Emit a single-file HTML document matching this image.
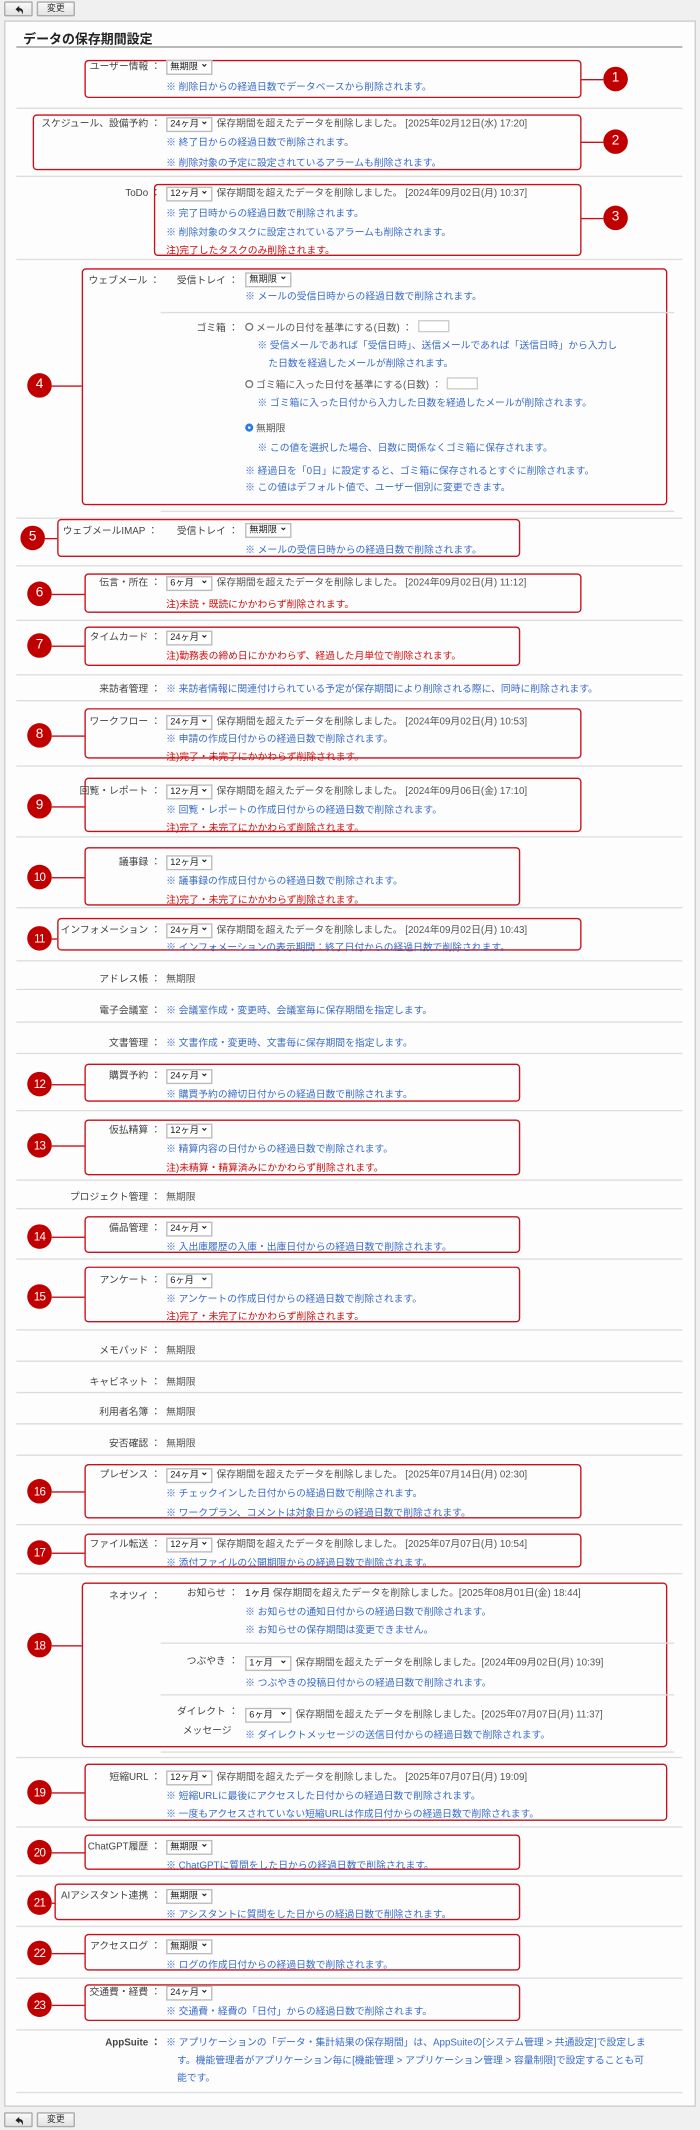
<!DOCTYPE html>
<html><head><meta charset="utf-8"><style>
html,body{margin:0;padding:0;background:#f0f0f0;width:700px;height:2130px;overflow:hidden}
#w{position:absolute;left:0;top:0;width:514px;height:1564px;transform:scale(1.3619);transform-origin:0 0;font-family:"Liberation Sans","Noto Sans CJK JP",sans-serif}
#w div{position:absolute;box-sizing:border-box}
.btn{height:11px;top:1px;border:1px solid #aaa;background:linear-gradient(#fafafa,#e2e2e2);border-radius:1px;font-size:6.5px;line-height:9px;text-align:center;color:#333}
.btn svg{position:absolute;left:7px;top:1.5px}
.p{left:3px;top:15px;width:508px;height:1532px;background:#fdfdfd;border:1px solid #ccc}
.t,.l,.n,.r,.g{font-size:7.2px;line-height:9px;white-space:nowrap}
.l{color:#444;text-align:right}
.n{color:#3a6cc8}.r{color:#d01010}.g{color:#555}
.d{left:12px;width:489px;height:1px;background:#ddd}
.di{left:118px;width:377px;height:1px;background:#ddd}
.b{border:1px solid #c8101a;border-radius:3px}
.c{width:18px;height:18px;border-radius:50%;background:#c00000;color:#fff;font-size:10px;line-height:18px;text-align:center}
.c2{font-size:8.5px;letter-spacing:-.5px}
.k{height:1px;background:#c8101a}
.s{height:11px;border:1px solid #bbb;background:#fff;font-size:6.8px;line-height:9px;padding-left:2px;color:#222;top:0}
.s:after{content:"⌄";position:absolute;right:2px;top:-2px;font-weight:bold;font-size:7px}
.in{width:23px;height:9px;border:1px solid #ccc;background:#fff}
.rd{width:6px;height:6px;border:1px solid #777;border-radius:50%;background:#fff}
</style></head><body><div id="w">
<div class="btn" style="left:3px;width:21px"><svg width="7" height="7" viewBox="0 0 10 10"><path d="M4.5 0.5 L0.5 4 L4.5 7.5 V5.3 C6.5 5.3 7.5 6.5 7.5 9.5 C9.5 5.5 8 3 4.5 2.8 Z" fill="#222"/></svg></div>
<div class="btn" style="left:27px;width:28px">変更</div>
<div class="p"></div>
<div style="left:17px;top:21px;font-size:9.5px;font-weight:bold;color:#222;white-space:nowrap">データの保存期間設定</div>
<div style="left:12px;top:34px;width:489px;height:1px;background:#999"></div>

<!-- 1 -->
<div class="b" style="left:62px;top:44px;width:365px;height:28px"></div>
<div class="k" style="left:427px;top:58px;width:16px"></div><div class="c" style="left:443px;top:49px">1</div>
<div class="l" style="right:396px;top:44px">ユーザー情報 ：</div>
<div class="s" style="left:122px;top:44px;width:34px">無期限</div>
<div class="n" style="left:122px;top:59px">※ 削除日からの経過日数でデータベースから削除されます。</div>
<div class="d" style="top:79px"></div>

<!-- 2 -->
<div class="b" style="left:24px;top:84px;width:403px;height:41px"></div>
<div class="k" style="left:427px;top:104px;width:16px"></div><div class="c" style="left:443px;top:95px">2</div>
<div class="l" style="right:396px;top:86px">スケジュール、設備予約 ：</div>
<div class="s" style="left:122px;top:86px;width:34px">24ヶ月</div>
<div class="g" style="left:159px;top:86px">保存期間を超えたデータを削除しました。 [2025年02月12日(水) 17:20]</div>
<div class="n" style="left:122px;top:100px">※ 終了日からの経過日数で削除されます。</div>
<div class="n" style="left:122px;top:115px">※ 削除対象の予定に設定されているアラームも削除されます。</div>
<div class="d" style="top:129px"></div>

<!-- 3 -->
<div class="b" style="left:113px;top:135px;width:314px;height:53px"></div>
<div class="k" style="left:427px;top:160px;width:16px"></div><div class="c" style="left:443px;top:151px">3</div>
<div class="l" style="right:396px;top:137px">ToDo ：</div>
<div class="s" style="left:122px;top:137px;width:34px">12ヶ月</div>
<div class="g" style="left:159px;top:137px">保存期間を超えたデータを削除しました。 [2024年09月02日(月) 10:37]</div>
<div class="n" style="left:122px;top:152px">※ 完了日時からの経過日数で削除されます。</div>
<div class="n" style="left:122px;top:166px">※ 削除対象のタスクに設定されているアラームも削除されます。</div>
<div class="r" style="left:122px;top:179px">注)完了したタスクのみ削除されます。</div>
<div class="d" style="top:190px"></div>

<!-- 4 -->
<div class="b" style="left:60px;top:197px;width:430px;height:174px"></div>
<div class="k" style="left:38px;top:283px;width:22px"></div><div class="c" style="left:20px;top:274px">4</div>
<div class="l" style="left:65px;top:201px">ウェブメール ：</div>
<div class="l" style="right:339px;top:201px">受信トレイ ：</div>
<div class="s" style="left:180px;top:200px;width:34px">無期限</div>
<div class="n" style="left:180px;top:213px">※ メールの受信日時からの経過日数で削除されます。</div>
<div class="di" style="top:229px"></div>
<div class="l" style="right:339px;top:236px">ゴミ箱 ：</div>
<div class="rd" style="left:180px;top:237px"></div>
<div class="g" style="left:188px;top:236px">メールの日付を基準にする(日数) ：</div>
<div class="in" style="left:307px;top:235px"></div>
<div class="n" style="left:189px;top:249px">※ 受信メールであれば「受信日時」、送信メールであれば「送信日時」から入力し</div>
<div class="n" style="left:197px;top:262px">た日数を経過したメールが削除されます。</div>
<div class="rd" style="left:180px;top:279px"></div>
<div class="g" style="left:188px;top:278px">ゴミ箱に入った日付を基準にする(日数) ：</div>
<div class="in" style="left:328px;top:277px"></div>
<div class="n" style="left:189px;top:291px">※ ゴミ箱に入った日付から入力した日数を経過したメールが削除されます。</div>
<div class="rd" style="left:180px;top:311px;border:2px solid #2a7de1;background:#2a7de1;box-shadow:inset 0 0 0 1px #fff"></div>
<div class="g" style="left:188px;top:310px">無期限</div>
<div class="n" style="left:189px;top:324px">※ この値を選択した場合、日数に関係なくゴミ箱に保存されます。</div>
<div class="n" style="left:180px;top:341px">※ 経過日を「0日」に設定すると、ゴミ箱に保存されるとすぐに削除されます。</div>
<div class="n" style="left:180px;top:353px">※ この値はデフォルト値で、ユーザー個別に変更できます。</div>
<div class="di" style="top:375px"></div>
<div class="d" style="top:380px"></div>

<!-- 5 -->
<div class="b" style="left:42px;top:381px;width:340px;height:28px"></div>
<div class="k" style="left:33px;top:395px;width:9px"></div><div class="c" style="left:15px;top:386px">5</div>
<div class="l" style="left:46px;top:385px">ウェブメールIMAP ：</div>
<div class="l" style="right:339px;top:385px">受信トレイ ：</div>
<div class="s" style="left:180px;top:384px;width:34px">無期限</div>
<div class="n" style="left:180px;top:399px">※ メールの受信日時からの経過日数で削除されます。</div>
<div class="d" style="top:415px"></div>

<!-- 6 -->
<div class="b" style="left:62px;top:421px;width:365px;height:29px"></div>
<div class="k" style="left:38px;top:436px;width:24px"></div><div class="c" style="left:20px;top:427px">6</div>
<div class="l" style="right:396px;top:423px">伝言・所在 ：</div>
<div class="s" style="left:122px;top:423px;width:34px">6ヶ月</div>
<div class="g" style="left:159px;top:423px">保存期間を超えたデータを削除しました。 [2024年09月02日(月) 11:12]</div>
<div class="r" style="left:122px;top:439px">注)未読・既読にかかわらず削除されます。</div>
<div class="d" style="top:455px"></div>

<!-- 7 -->
<div class="b" style="left:62px;top:460px;width:320px;height:29px"></div>
<div class="k" style="left:38px;top:474px;width:24px"></div><div class="c" style="left:20px;top:465px">7</div>
<div class="l" style="right:396px;top:463px">タイムカード ：</div>
<div class="s" style="left:122px;top:463px;width:34px">24ヶ月</div>
<div class="r" style="left:122px;top:477px">注)勤務表の締め日にかかわらず、経過した月単位で削除されます。</div>
<div class="d" style="top:495px"></div>

<div class="l" style="right:396px;top:501px">来訪者管理 ：</div>
<div class="n" style="left:122px;top:501px">※ 来訪者情報に関連付けられている予定が保存期間により削除される際に、同時に削除されます。</div>
<div class="d" style="top:514px"></div>

<!-- 8 -->
<div class="b" style="left:62px;top:520px;width:365px;height:37px"></div>
<div class="k" style="left:38px;top:540px;width:24px"></div><div class="c" style="left:20px;top:531px">8</div>
<div class="l" style="right:396px;top:525px">ワークフロー ：</div>
<div class="s" style="left:122px;top:525px;width:34px">24ヶ月</div>
<div class="g" style="left:159px;top:525px">保存期間を超えたデータを削除しました。 [2024年09月02日(月) 10:53]</div>
<div class="n" style="left:122px;top:538px">※ 申請の作成日付からの経過日数で削除されます。</div>
<div class="r" style="left:122px;top:551px">注)完了・未完了にかかわらず削除されます。</div>
<div class="d" style="top:562px"></div>

<!-- 9 -->
<div class="b" style="left:62px;top:571px;width:365px;height:40px"></div>
<div class="k" style="left:38px;top:592px;width:24px"></div><div class="c" style="left:20px;top:583px">9</div>
<div class="l" style="right:396px;top:576px">回覧・レポート ：</div>
<div class="s" style="left:122px;top:576px;width:34px">12ヶ月</div>
<div class="g" style="left:159px;top:576px">保存期間を超えたデータを削除しました。 [2024年09月06日(金) 17:10]</div>
<div class="n" style="left:122px;top:590px">※ 回覧・レポートの作成日付からの経過日数で削除されます。</div>
<div class="r" style="left:122px;top:603px">注)完了・未完了にかかわらず削除されます。</div>
<div class="d" style="top:614px"></div>

<!-- 10 -->
<div class="b" style="left:62px;top:622px;width:320px;height:43px"></div>
<div class="k" style="left:38px;top:644px;width:24px"></div><div class="c c2" style="left:20px;top:635px">10</div>
<div class="l" style="right:396px;top:628px">議事録 ：</div>
<div class="s" style="left:122px;top:628px;width:34px">12ヶ月</div>
<div class="n" style="left:122px;top:642px">※ 議事録の作成日付からの経過日数で削除されます。</div>
<div class="r" style="left:122px;top:656px">注)完了・未完了にかかわらず削除されます。</div>
<div class="d" style="top:666px"></div>

<!-- 11 -->
<div class="b" style="left:42px;top:674px;width:385px;height:24px"></div>
<div class="k" style="left:38px;top:689px;width:4px"></div><div class="c c2" style="left:20px;top:680px">11</div>
<div class="l" style="right:396px;top:678px">インフォメーション ：</div>
<div class="s" style="left:122px;top:678px;width:34px">24ヶ月</div>
<div class="g" style="left:159px;top:678px">保存期間を超えたデータを削除しました。 [2024年09月02日(月) 10:43]</div>
<div class="n" style="left:122px;top:691px">※ インフォメーションの表示期間：終了日付からの経過日数で削除されます。</div>
<div class="d" style="top:705px"></div>

<div class="l" style="right:396px;top:714px">アドレス帳 ：</div><div class="g" style="left:122px;top:714px">無期限</div>
<div class="d" style="top:726px"></div>
<div class="l" style="right:396px;top:737px">電子会議室 ：</div><div class="n" style="left:122px;top:737px">※ 会議室作成・変更時、会議室毎に保存期間を指定します。</div>
<div class="d" style="top:750px"></div>
<div class="l" style="right:396px;top:761px">文書管理 ：</div><div class="n" style="left:122px;top:761px">※ 文書作成・変更時、文書毎に保存期間を指定します。</div>
<div class="d" style="top:773px"></div>

<!-- 12 -->
<div class="b" style="left:62px;top:781px;width:320px;height:28px"></div>
<div class="k" style="left:38px;top:796px;width:24px"></div><div class="c c2" style="left:20px;top:787px">12</div>
<div class="l" style="right:396px;top:785px">購買予約 ：</div>
<div class="s" style="left:122px;top:785px;width:34px">24ヶ月</div>
<div class="n" style="left:122px;top:799px">※ 購買予約の締切日付からの経過日数で削除されます。</div>
<div class="d" style="top:815px"></div>

<!-- 13 -->
<div class="b" style="left:62px;top:822px;width:320px;height:41px"></div>
<div class="k" style="left:38px;top:841px;width:24px"></div><div class="c c2" style="left:20px;top:832px">13</div>
<div class="l" style="right:396px;top:825px">仮払精算 ：</div>
<div class="s" style="left:122px;top:825px;width:34px">12ヶ月</div>
<div class="n" style="left:122px;top:839px">※ 精算内容の日付からの経過日数で削除されます。</div>
<div class="r" style="left:122px;top:853px">注)未精算・精算済みにかかわらず削除されます。</div>
<div class="d" style="top:866px"></div>

<div class="l" style="right:396px;top:874px">プロジェクト管理 ：</div><div class="g" style="left:122px;top:874px">無期限</div>
<div class="d" style="top:887px"></div>

<!-- 14 -->
<div class="b" style="left:62px;top:893px;width:320px;height:27px"></div>
<div class="k" style="left:38px;top:908px;width:24px"></div><div class="c c2" style="left:20px;top:899px">14</div>
<div class="l" style="right:396px;top:897px">備品管理 ：</div>
<div class="s" style="left:122px;top:897px;width:34px">24ヶ月</div>
<div class="n" style="left:122px;top:911px">※ 入出庫履歴の入庫・出庫日付からの経過日数で削除されます。</div>
<div class="d" style="top:924px"></div>

<!-- 15 -->
<div class="b" style="left:62px;top:930px;width:320px;height:41px"></div>
<div class="k" style="left:38px;top:952px;width:24px"></div><div class="c c2" style="left:20px;top:943px">15</div>
<div class="l" style="right:396px;top:935px">アンケート ：</div>
<div class="s" style="left:122px;top:935px;width:34px">6ヶ月</div>
<div class="n" style="left:122px;top:949px">※ アンケートの作成日付からの経過日数で削除されます。</div>
<div class="r" style="left:122px;top:962px">注)完了・未完了にかかわらず削除されます。</div>
<div class="d" style="top:976px"></div>

<div class="l" style="right:396px;top:987px">メモパッド ：</div><div class="g" style="left:122px;top:987px">無期限</div>
<div class="d" style="top:999px"></div>
<div class="l" style="right:396px;top:1010px">キャビネット ：</div><div class="g" style="left:122px;top:1010px">無期限</div>
<div class="d" style="top:1022px"></div>
<div class="l" style="right:396px;top:1032px">利用者名簿 ：</div><div class="g" style="left:122px;top:1032px">無期限</div>
<div class="d" style="top:1045px"></div>
<div class="l" style="right:396px;top:1055px">安否確認 ：</div><div class="g" style="left:122px;top:1055px">無期限</div>
<div class="d" style="top:1068px"></div>

<!-- 16 -->
<div class="b" style="left:62px;top:1075px;width:365px;height:40px"></div>
<div class="k" style="left:38px;top:1095px;width:24px"></div><div class="c c2" style="left:20px;top:1086px">16</div>
<div class="l" style="right:396px;top:1078px">プレゼンス ：</div>
<div class="s" style="left:122px;top:1078px;width:34px">24ヶ月</div>
<div class="g" style="left:159px;top:1078px">保存期間を超えたデータを削除しました。 [2025年07月14日(月) 02:30]</div>
<div class="n" style="left:122px;top:1092px">※ チェックインした日付からの経過日数で削除されます。</div>
<div class="n" style="left:122px;top:1106px">※ ワークプラン、コメントは対象日からの経過日数で削除されます。</div>
<div class="d" style="top:1119px"></div>

<!-- 17 -->
<div class="b" style="left:62px;top:1126px;width:365px;height:25px"></div>
<div class="k" style="left:38px;top:1140px;width:24px"></div><div class="c c2" style="left:20px;top:1131px">17</div>
<div class="l" style="right:396px;top:1129px">ファイル転送 ：</div>
<div class="s" style="left:122px;top:1129px;width:34px">12ヶ月</div>
<div class="g" style="left:159px;top:1129px">保存期間を超えたデータを削除しました。 [2025年07月07日(月) 10:54]</div>
<div class="n" style="left:122px;top:1143px">※ 添付ファイルの公開期限からの経過日数で削除されます。</div>
<div class="d" style="top:1155px"></div>

<!-- 18 -->
<div class="b" style="left:60px;top:1162px;width:430px;height:121px"></div>
<div class="k" style="left:38px;top:1208px;width:22px"></div><div class="c c2" style="left:20px;top:1199px">18</div>
<div class="l" style="right:396px;top:1167px">ネオツイ ：</div>
<div class="l" style="right:339px;top:1165px">お知らせ ：</div>
<div class="g" style="left:180px;top:1165px"><span style="color:#222">1ヶ月</span> 保存期間を超えたデータを削除しました。[2025年08月01日(金) 18:44]</div>
<div class="n" style="left:180px;top:1179px">※ お知らせの通知日付からの経過日数で削除されます。</div>
<div class="n" style="left:180px;top:1192px">※ お知らせの保存期間は変更できません。</div>
<div class="di" style="top:1206px"></div>
<div class="l" style="right:339px;top:1215px">つぶやき ：</div>
<div class="s" style="left:180px;top:1216px;width:34px">1ヶ月</div>
<div class="g" style="left:217px;top:1216px">保存期間を超えたデータを削除しました。[2024年09月02日(月) 10:39]</div>
<div class="n" style="left:180px;top:1231px">※ つぶやきの投稿日付からの経過日数で削除されます。</div>
<div class="di" style="top:1244px"></div>
<div class="l" style="right:339px;top:1252px">ダイレクト ：</div>
<div class="l" style="right:344px;top:1266px">メッセージ</div>
<div class="s" style="left:180px;top:1254px;width:34px">6ヶ月</div>
<div class="g" style="left:217px;top:1254px">保存期間を超えたデータを削除しました。[2025年07月07日(月) 11:37]</div>
<div class="n" style="left:180px;top:1269px">※ ダイレクトメッセージの送信日付からの経過日数で削除されます。</div>
<div class="di" style="top:1286px"></div>
<div class="d" style="top:1290px"></div>

<!-- 19 -->
<div class="b" style="left:62px;top:1295px;width:428px;height:42px"></div>
<div class="k" style="left:38px;top:1316px;width:24px"></div><div class="c c2" style="left:20px;top:1307px">19</div>
<div class="l" style="right:396px;top:1300px">短縮URL ：</div>
<div class="s" style="left:122px;top:1300px;width:34px">12ヶ月</div>
<div class="g" style="left:159px;top:1300px">保存期間を超えたデータを削除しました。 [2025年07月07日(月) 19:09]</div>
<div class="n" style="left:122px;top:1314px">※ 短縮URLに最後にアクセスした日付からの経過日数で削除されます。</div>
<div class="n" style="left:122px;top:1327px">※ 一度もアクセスされていない短縮URLは作成日付からの経過日数で削除されます。</div>
<div class="d" style="top:1341px"></div>

<!-- 20 -->
<div class="b" style="left:62px;top:1347px;width:320px;height:26px"></div>
<div class="k" style="left:38px;top:1360px;width:24px"></div><div class="c c2" style="left:20px;top:1351px">20</div>
<div class="l" style="right:396px;top:1351px">ChatGPT履歴 ：</div>
<div class="s" style="left:122px;top:1351px;width:34px">無期限</div>
<div class="n" style="left:122px;top:1365px">※ ChatGPTに質問をした日からの経過日数で削除されます。</div>
<div class="d" style="top:1377px"></div>

<!-- 21 -->
<div class="b" style="left:40px;top:1383px;width:342px;height:27px"></div>
<div class="k" style="left:38px;top:1397px;width:2px"></div><div class="c c2" style="left:20px;top:1388px">21</div>
<div class="l" style="right:396px;top:1387px">AIアシスタント連携 ：</div>
<div class="s" style="left:122px;top:1387px;width:34px">無期限</div>
<div class="n" style="left:122px;top:1401px">※ アシスタントに質問をした日からの経過日数で削除されます。</div>
<div class="d" style="top:1414px"></div>

<!-- 22 -->
<div class="b" style="left:62px;top:1420px;width:320px;height:27px"></div>
<div class="k" style="left:38px;top:1434px;width:24px"></div><div class="c c2" style="left:20px;top:1425px">22</div>
<div class="l" style="right:396px;top:1424px">アクセスログ ：</div>
<div class="s" style="left:122px;top:1424px;width:34px">無期限</div>
<div class="n" style="left:122px;top:1438px">※ ログの作成日付からの経過日数で削除されます。</div>
<div class="d" style="top:1452px"></div>

<!-- 23 -->
<div class="b" style="left:62px;top:1457px;width:320px;height:27px"></div>
<div class="k" style="left:38px;top:1472px;width:24px"></div><div class="c c2" style="left:20px;top:1463px">23</div>
<div class="l" style="right:396px;top:1458px">交通費・経費 ：</div>
<div class="s" style="left:122px;top:1458px;width:34px">24ヶ月</div>
<div class="n" style="left:122px;top:1472px">※ 交通費・経費の「日付」からの経過日数で削除されます。</div>
<div class="d" style="top:1490px"></div>

<div class="l" style="right:396px;top:1495px;font-weight:bold">AppSuite ：</div>
<div class="n" style="left:122px;top:1495px">※ アプリケーションの「データ・集計結果の保存期間」は、AppSuiteの[システム管理 &gt; 共通設定]で設定しま</div>
<div class="n" style="left:130px;top:1508px">す。機能管理者がアプリケーション毎に[機能管理 &gt; アプリケーション管理 &gt; 容量制限]で設定することも可</div>
<div class="n" style="left:130px;top:1521px">能です。</div>
<div class="d" style="top:1536px"></div>

<div class="btn" style="left:3px;top:1551px;width:21px"><svg width="7" height="7" viewBox="0 0 10 10"><path d="M4.5 0.5 L0.5 4 L4.5 7.5 V5.3 C6.5 5.3 7.5 6.5 7.5 9.5 C9.5 5.5 8 3 4.5 2.8 Z" fill="#222"/></svg></div>
<div class="btn" style="left:27px;top:1551px;width:28px">変更</div>
</div></body></html>
